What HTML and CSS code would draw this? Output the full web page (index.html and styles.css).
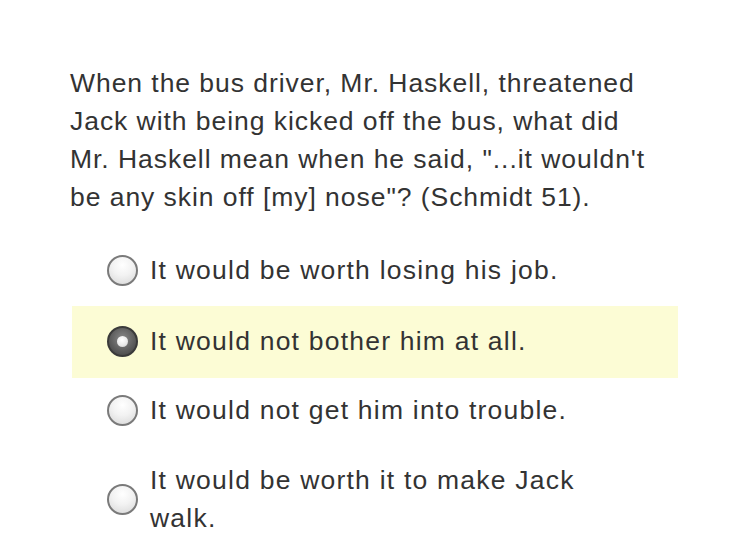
FILE: index.html
```html
<!DOCTYPE html>
<html>
<head>
<meta charset="utf-8">
<link rel="stylesheet" href="styles.css">
</head>
<body>
<div class="page">
  <p class="question">When the bus driver, Mr. Haskell, threatened Jack with being kicked off the bus, what did Mr. Haskell mean when he said, "...it wouldn't be any skin off [my] nose"? (Schmidt 51).</p>
  <div class="options">
    <div class="option"><span class="radio"></span><span class="label">It would be worth losing his job.</span></div>
    <div class="option selected"><span class="radio"></span><span class="label">It would not bother him at all.</span></div>
    <div class="option"><span class="radio"></span><span class="label">It would not get him into trouble.</span></div>
    <div class="option"><span class="radio"></span><span class="label">It would be worth it to make Jack walk.</span></div>
  </div>
</div>
</body>
</html>
```
FILE: styles.css
```css
html, body {
  margin: 0;
  padding: 0;
  background: #ffffff;
}
.page {
  padding: 64px 0 0 70px;
  width: 608px;
  font-family: "Liberation Sans", Arial, sans-serif;
  color: #333333;
  font-size: 26.5px;
  letter-spacing: 0.95px;
  line-height: 38px;
}
.question {
  margin: 0 0 19px 0;
  width: 592px;
}
.options {
  margin-left: 2px;
  width: 606px;
}
.option {
  display: flex;
  align-items: center;
  padding: 16px 0 16px 35px;
}
.option.selected {
  background: #fcfcd5;
  margin: 1px 0 -3px 0;
  padding-bottom: 18px;
}
.radio {
  flex: none;
  width: 27px;
  height: 27px;
  border-radius: 50%;
  border: 2px solid #7a7a7a;
  background: radial-gradient(circle at 50% 30%, #ffffff 0%, #f2f2f2 45%, #d6d6d6 100%);
  margin-right: 12px;
  box-sizing: content-box;
  position: relative;
}
.selected .radio {
  border-color: #3a3a3a;
  background: radial-gradient(circle at 50% 40%, #8a8a8a 0%, #5a5a5a 60%, #3d3d3d 100%);
}
.selected .radio::after {
  content: "";
  position: absolute;
  left: 50%;
  top: 50%;
  width: 11px;
  height: 11px;
  margin: -5.5px 0 0 -5.5px;
  border-radius: 50%;
  background: radial-gradient(circle at 45% 35%, #ffffff 0%, #e8e8e8 60%, #b8b8b8 100%);
}
.label {
  width: 445px;
  letter-spacing: 1.22px;
}
```
